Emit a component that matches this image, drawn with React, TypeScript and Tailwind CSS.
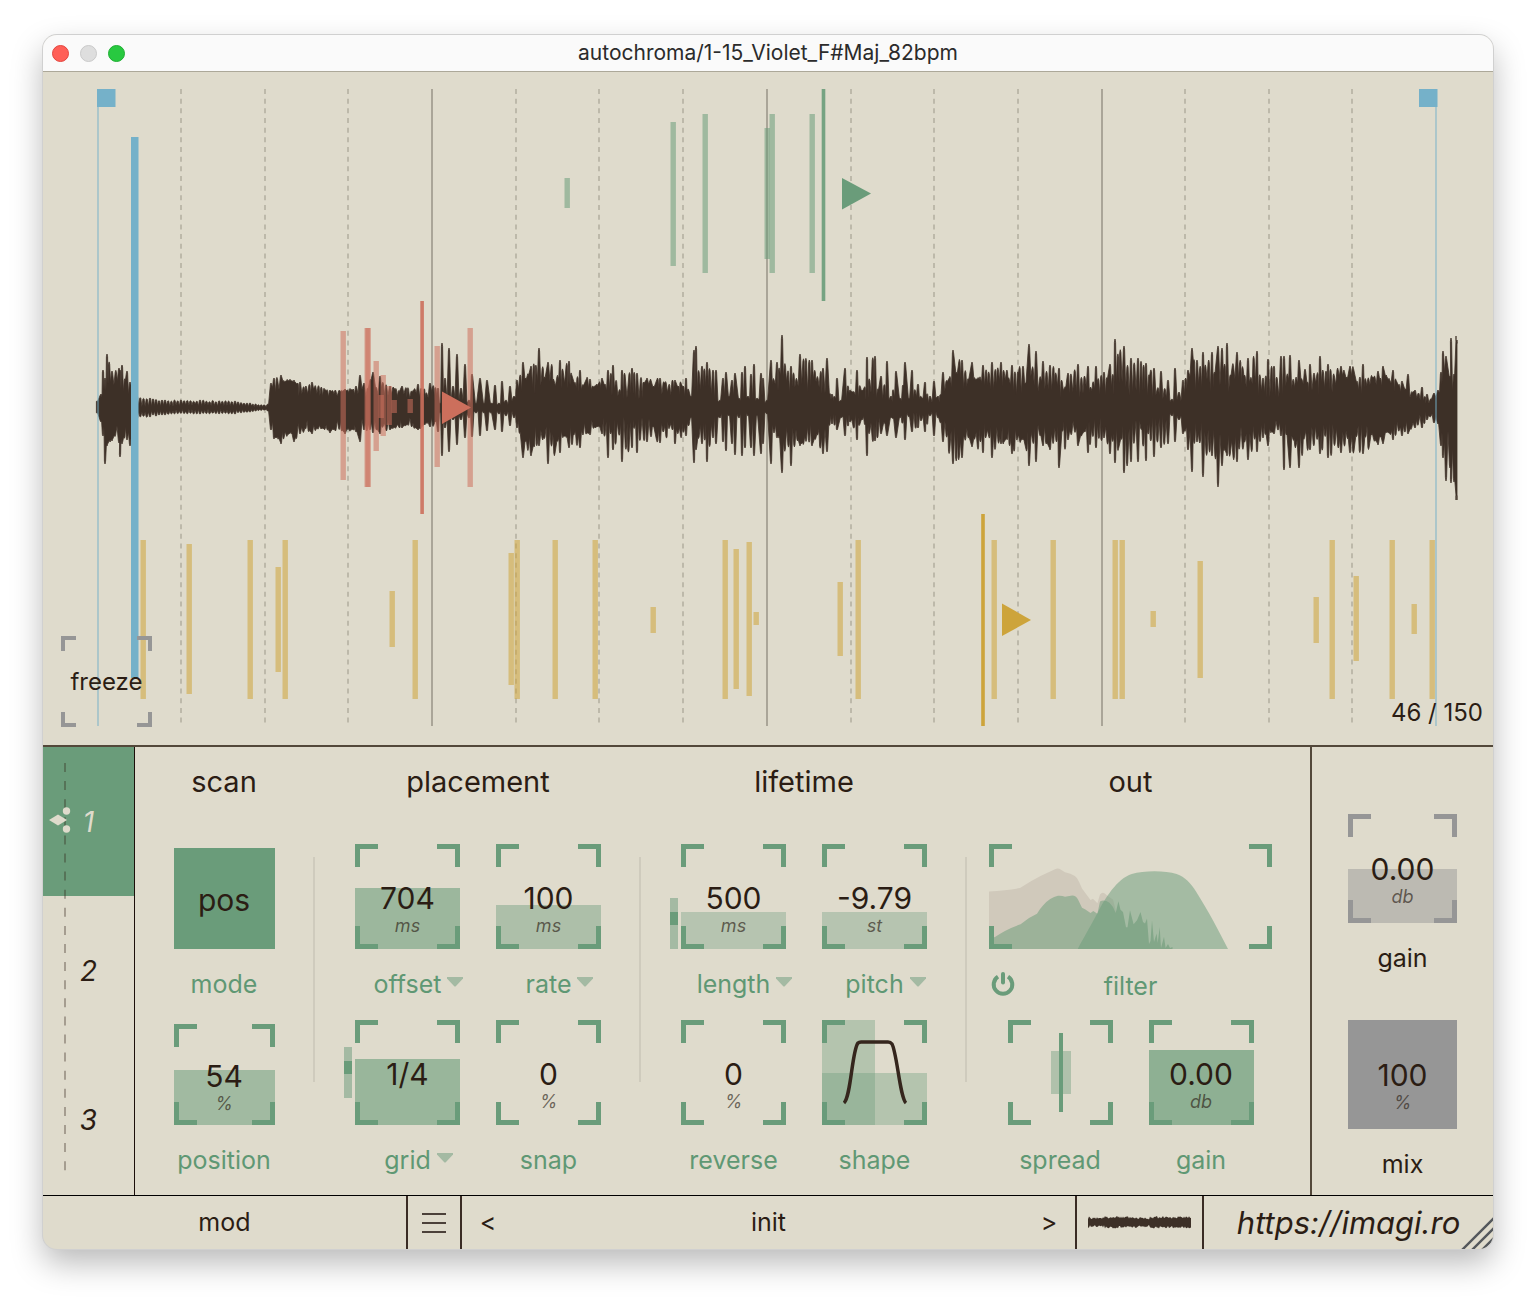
import { useId, type ReactNode } from "react";

/* ---------- waveform ---------- */

// x, upper peak, upper body, lower peak, lower body (distances from the centre line)
const ENVELOPE: number[][] = [
  [97, 7, 5, 5, 4], [101, 14, 8, 14, 8], [103, 38, 22, 28, 20], [105, 30, 20, 56, 25], [107, 54, 24, 38, 25],
  [112, 37, 22, 33, 24], [119, 40, 28, 35, 26], [120, 38, 28, 49, 28], [122, 43, 28, 36, 26], [127, 37, 22, 32, 20],
  [130, 26, 16, 38, 20], [137, 12, 3, 11, 3], [150, 10, 2, 9, 3], [165, 8, 2, 7, 3], [200, 8, 3, 6, 2],
  [235, 7, 2, 6, 2], [250, 5, 2, 4, 2], [264, 3, 1, 2, 1], [268, 4, 2, 3, 2], [271, 25, 14, 22, 14],
  [274, 30, 24, 31, 26], [281, 33, 24, 36, 28], [294, 28, 24, 34, 24], [300, 26, 17, 26, 20], [312, 26, 18, 26, 21],
  [330, 18, 16, 25, 20], [345, 19, 17, 26, 20], [356, 22, 18, 24, 20], [360, 33, 18, 34, 20], [364, 25, 17, 22, 14],
  [373, 36, 20, 25, 18], [380, 32, 18, 26, 18], [390, 22, 18, 22, 17], [402, 22, 16, 20, 16], [418, 24, 16, 22, 16],
  [430, 25, 13, 19, 14], [438, 20, 12, 24, 10], [440, 5, 4, 5, 3], [442, 65, 12, 48, 10], [445, 30, 10, 20, 8],
  [449, 60, 10, 44, 8], [453, 22, 8, 12, 7], [457, 54, 9, 37, 7], [461, 20, 7, 12, 6], [465, 44, 7, 30, 5],
  [469, 8, 5, 10, 5], [472, 34, 6, 29, 4], [476, 5, 4, 5, 3], [480, 30, 5, 28, 4], [484, 5, 4, 5, 3],
  [487, 28, 5, 23, 4], [491, 5, 4, 5, 3], [495, 23, 5, 22, 4], [499, 5, 4, 6, 3], [502, 27, 6, 24, 4],
  [506, 8, 4, 8, 3], [510, 22, 6, 18, 5], [514, 12, 5, 10, 4], [517, 28, 12, 20, 10], [523, 46, 24, 50, 28],
  [531, 42, 24, 48, 28], [539, 60, 22, 38, 28], [548, 46, 26, 56, 28], [560, 48, 26, 45, 28], [569, 47, 25, 40, 26],
  [580, 38, 22, 40, 20], [590, 29, 20, 27, 18], [602, 30, 22, 26, 16], [608, 38, 14, 50, 15], [613, 43, 16, 42, 18],
  [622, 38, 14, 54, 12], [632, 40, 12, 40, 14], [637, 35, 12, 45, 14], [647, 30, 20, 34, 16], [660, 30, 20, 35, 18],
  [675, 28, 20, 36, 18], [686, 30, 18, 28, 16], [691, 12, 8, 10, 8], [694, 58, 28, 55, 25], [696, 62, 26, 42, 25],
  [702, 42, 18, 36, 22], [707, 46, 20, 54, 20], [713, 38, 15, 30, 16], [716, 38, 12, 36, 10], [720, 8, 6, 10, 7],
  [723, 30, 10, 34, 8], [726, 36, 10, 43, 8], [729, 12, 8, 8, 6], [732, 28, 10, 36, 8], [735, 35, 10, 47, 8],
  [739, 10, 8, 10, 7], [742, 36, 10, 48, 8], [745, 42, 10, 40, 8], [748, 12, 6, 8, 5], [751, 34, 10, 40, 8],
  [754, 44, 10, 48, 8], [757, 10, 7, 8, 6], [761, 35, 10, 46, 8], [763, 30, 8, 36, 8], [767, 8, 5, 6, 4],
  [771, 48, 22, 56, 22], [777, 46, 25, 30, 22], [782, 73, 30, 65, 28], [791, 42, 20, 58, 22], [800, 54, 20, 38, 24],
  [812, 48, 25, 38, 24], [823, 40, 20, 46, 24], [827, 50, 18, 44, 20], [832, 14, 7, 16, 8], [837, 30, 8, 22, 8],
  [841, 8, 6, 10, 7], [845, 40, 10, 28, 8], [850, 18, 12, 14, 8], [857, 38, 15, 32, 10], [862, 18, 14, 12, 9],
  [867, 51, 12, 48, 14], [875, 52, 14, 33, 15], [881, 32, 14, 26, 12], [887, 47, 10, 28, 14], [891, 12, 8, 10, 8],
  [896, 37, 12, 30, 10], [900, 10, 8, 10, 8], [905, 46, 12, 32, 8], [909, 10, 8, 9, 7], [912, 38, 8, 24, 7],
  [918, 24, 8, 20, 6], [925, 26, 8, 24, 6], [930, 12, 7, 8, 5], [934, 27, 8, 28, 6], [938, 12, 7, 10, 6],
  [943, 36, 18, 34, 20], [953, 58, 28, 56, 28], [962, 48, 26, 50, 26], [972, 46, 28, 39, 28], [983, 43, 26, 45, 26],
  [992, 46, 24, 50, 28], [1001, 46, 25, 36, 30], [1012, 43, 22, 46, 28], [1023, 42, 18, 32, 22], [1029, 64, 26, 58, 25],
  [1036, 57, 22, 54, 25], [1043, 47, 20, 38, 26], [1050, 43, 20, 42, 25], [1059, 40, 16, 60, 20], [1068, 35, 18, 32, 18],
  [1078, 44, 14, 38, 24], [1088, 42, 16, 45, 16], [1096, 42, 18, 40, 14], [1104, 36, 18, 30, 14], [1110, 44, 22, 46, 24],
  [1115, 69, 20, 55, 24], [1124, 62, 22, 65, 22], [1131, 50, 14, 54, 20], [1138, 50, 14, 54, 16], [1146, 45, 14, 53, 14],
  [1154, 40, 10, 49, 14], [1161, 37, 10, 40, 12], [1168, 28, 8, 36, 8], [1172, 9, 6, 8, 5], [1175, 40, 8, 34, 6],
  [1179, 16, 8, 12, 6], [1183, 28, 12, 26, 10], [1188, 38, 26, 42, 16], [1192, 60, 32, 64, 24], [1197, 48, 24, 34, 22],
  [1203, 56, 24, 69, 22], [1212, 56, 28, 48, 22], [1218, 62, 40, 79, 34], [1222, 60, 32, 58, 30], [1227, 65, 24, 48, 28],
  [1237, 56, 26, 54, 28], [1248, 50, 22, 52, 26], [1257, 57, 20, 44, 24], [1263, 30, 18, 30, 20], [1268, 49, 14, 38, 20],
  [1274, 42, 12, 26, 20], [1281, 52, 10, 28, 16], [1284, 52, 18, 62, 20], [1290, 53, 22, 60, 24], [1299, 48, 26, 60, 25],
  [1310, 44, 20, 42, 20], [1320, 52, 20, 46, 20], [1328, 44, 26, 50, 24], [1341, 42, 26, 45, 25], [1350, 42, 28, 45, 26],
  [1363, 44, 22, 46, 26], [1378, 37, 26, 37, 25], [1383, 42, 24, 36, 24], [1393, 38, 24, 32, 20], [1402, 27, 18, 28, 20],
  [1408, 34, 16, 26, 18], [1415, 18, 10, 20, 10], [1422, 21, 6, 20, 8], [1427, 14, 5, 12, 6], [1434, 15, 10, 15, 10],
  [1438, 18, 14, 16, 12], [1441, 36, 16, 38, 14], [1443, 57, 26, 50, 22], [1446, 52, 30, 73, 28], [1450, 32, 20, 60, 24],
  [1451, 70, 28, 75, 34], [1454, 34, 22, 74, 30], [1456, 72, 70, 92, 90], [1457, 68, 60, 92, 90],
];

function noise(n: number) {
  const v = Math.sin(n * 127.1 + 31.7) * 43758.5453;
  return v - Math.floor(v);
}

// Outline of one half of the wave: rounded peaks with valleys between them.
function halfWave(peak: number, body: number) {
  const peaks: number[][] = [];
  ENVELOPE.forEach((key, i) => {
    peaks.push([key[0], key[peak], key[body]]);
    const after = ENVELOPE[i + 1];
    if (!after) return;
    const gap = after[0] - key[0];
    const quiet = key[peak] < 13 && gap > 10;
    const count = gap > 4.5 ? Math.round(gap / 3.1) : 1;
    for (let n = 1; n < count; n++) {
      const t = quiet ? n / count : (n + (noise(n + key[0] + body) - 0.5) * 0.5) / count;
      const x = key[0] + gap * t;
      const top = key[peak] + (after[peak] - key[peak]) * t;
      const low = key[body] + (after[body] - key[body]) * t;
      const lift = quiet ? 0.7 + 0.3 * noise(x + peak) : 0.1 + 0.9 * noise(x + peak);
      peaks.push([x, low + (top - low) * lift, low]);
    }
  });
  const points: number[][] = [];
  peaks.forEach(([x, h, low], i) => {
    const w = x > 1454 ? 0 : 0.6;
    points.push([x - w, h * 0.95], [x, h], [x + w, h * 0.95]);
    const after = peaks[i + 1];
    if (!after || after[0] - x < 2) return;
    const valley = ((low + after[2]) / 2) * (0.6 + 0.75 * noise(x * 1.7 + peak));
    if (Math.min(h, after[1]) > valley * 1.15) points.push([(x + after[0]) / 2, valley]);
  });
  return points;
}

function buildWave(centre: number) {
  const up = halfWave(1, 2).map(([x, h]) => `${x.toFixed(1)} ${(centre - h).toFixed(1)}`);
  const down = halfWave(3, 4).map(([x, h]) => `${x.toFixed(1)} ${(centre + h).toFixed(1)}`);
  return `M${up.join("L")}L${down.reverse().join("L")}Z`;
}

function buildMiniWave() {
  const up: string[] = [];
  const down: string[] = [];
  for (let x = 0; x <= 103; x += 1) {
    const body = x < 17 ? 3.2 : x > 48 && x < 62 ? 2.8 : 4;
    up.push(`${x} ${(7.5 - body - noise(x) * 2.8).toFixed(1)}`);
    down.push(`${x} ${(7.5 + body - 0.5 + noise(x + 0.5) * 2.6).toFixed(1)}`);
  }
  return `M${up.join("L")}L${down.reverse().join("L")}Z`;
}

const WAVE = buildWave(408);
const MINI_WAVE = buildMiniWave();

const BEATS = [181, 265, 348, 516, 599, 683, 851, 934, 1018, 1185, 1269, 1352];
const BARS = [432, 767, 1102];

// x centre, top, bottom
const GREEN_GRAINS = [
  [567, 178, 208], [673, 122, 266], [705, 114, 273], [767, 128, 259], [772, 114, 273], [812, 114, 273],
];
const RED_GRAINS = [
  [343, 331, 480], [367, 328, 487], [368, 328, 487], [376, 361, 451], [383, 375, 436], [389, 386, 425],
  [381, 395, 418], [394, 400, 413], [410, 399, 413], [437, 346, 467], [470, 328, 487],
];
const GOLD_GRAINS = [
  [143, 540, 699], [189, 544, 694], [250, 540, 699], [278, 567, 672], [285, 540, 699], [392, 591, 647],
  [415, 540, 699], [511, 553, 685], [517, 540, 699], [555, 540, 699], [595, 540, 699], [653, 607, 633],
  [725, 540, 699], [736, 549, 689], [749, 542, 696], [756, 612, 625], [840, 582, 656], [858, 540, 699],
  [994, 540, 699], [1053, 540, 699], [1115, 540, 699], [1122, 540, 699], [1153, 611, 627], [1200, 561, 678],
  [1316, 597, 643], [1332, 540, 699], [1356, 576, 661], [1392, 540, 699], [1414, 604, 634], [1432, 540, 699],
];

function Grains({ items, color }: { items: number[][]; color: string }) {
  return (
    <g fill={color} fillOpacity={0.55}>
      {items.map(([x, a, b], i) => (
        <rect key={i} x={x - 2.5} y={a} width={5.4} height={b - a} />
      ))}
    </g>
  );
}

function WaveView() {
  return (
    <section className="relative border-b-2 border-[#53483a]">
      <svg viewBox="43 72 1450 673" className="block h-auto w-full" role="img" aria-label="waveform">
        <g stroke="#bdb9aa" strokeWidth={2} strokeDasharray="5 4.67">
          {BEATS.map((x) => (
            <path key={x} d={`M${x} 89V724`} />
          ))}
        </g>
        <g stroke="#aaa598" strokeWidth={2}>
          {BARS.map((x) => (
            <path key={x} d={`M${x} 89V726`} />
          ))}
        </g>
        <path d={WAVE} fill="#3d3027" stroke="#3d3027" strokeWidth={0.8} strokeLinejoin="round" />
        <path d="M98 89V726M1436 89V726" stroke="#75b1c9" strokeOpacity={0.6} strokeWidth={1.6} />
        <path d="M97 89h18.500v18H97zM1419 89h18.500v18H1419z" fill="#75b1c9" />
        <Grains items={GREEN_GRAINS} color="#6a9c7a" />
        <Grains items={RED_GRAINS} color="#cc6f5c" />
        <Grains items={GOLD_GRAINS} color="#cda43b" />
        <rect x={821.700} y={89} width={3.600} height={212} fill="#6a9c7a" fillOpacity={0.9} />
        <rect x={420.300} y={301} width={3.600} height={213} fill="#cc6f5c" fillOpacity={0.9} />
        <rect x={981.200} y={514} width={3.600} height={212} fill="#cda43b" />
        <path d="M842 178L871 193.500L842 209.500Z" fill="#6a9c7a" />
        <path d="M442 391.500L471 407.500L442 424Z" fill="#cc6f5c" />
        <path d="M1002 603.500L1031 620L1002 636Z" fill="#cda43b" />
        <rect x={131} y={137} width={7.500} height={541} fill="#75b1c9" />
      </svg>
      <button className="absolute bottom-[18px] left-[18px] flex h-[91px] w-[91px] items-center justify-center text-2xl">
        <Corners tone="grey" small />
        freeze
      </button>
      <p className="absolute right-2.5 bottom-4 text-2xl leading-8">46 / 150</p>
    </section>
  );
}

/* ---------- controls ---------- */

function Corners({ tone = "green", small = false }: { tone?: "green" | "grey"; small?: boolean }) {
  const color = tone === "green" ? "border-[#6a9c7a]" : "border-[#969696]";
  const size = small ? "size-[15px]" : "size-[23px]";
  const base = `pointer-events-none absolute ${size} ${color}`;
  const edges = small
    ? ["border-t-4 border-l-4", "border-t-4 border-r-4", "border-b-4 border-l-4", "border-b-4 border-r-4"]
    : [
        "border-t-[5px] border-l-[5px]",
        "border-t-[5px] border-r-[5px]",
        "border-b-[5px] border-l-[5px]",
        "border-b-[5px] border-r-[5px]",
      ];
  return (
    <>
      <span className={`${base} top-0 left-0 ${edges[0]}`} />
      <span className={`${base} top-0 right-0 ${edges[1]}`} />
      <span className={`${base} bottom-0 left-0 ${edges[2]}`} />
      <span className={`${base} right-0 bottom-0 ${edges[3]}`} />
    </>
  );
}

type KnobProps = {
  label: string;
  value?: string;
  unit?: string;
  level?: number;
  strength?: number;
  tone?: "green" | "grey";
  size?: string;
  menu?: boolean;
  meter?: string;
  children?: ReactNode;
};

function Knob({
  label,
  value,
  unit,
  level = 0,
  strength = 0,
  tone = "green",
  size = "size-[105px] pb-[11px]",
  menu = false,
  meter,
  children,
}: KnobProps) {
  const id = useId();
  return (
    <div className="flex flex-col items-center justify-end">
      <div className={`relative flex shrink-0 flex-col items-center justify-end ${size}`}>
        <span
          className={`absolute inset-x-0 bottom-0 ${tone === "green" ? "bg-[#6a9c7a]" : "bg-[#969696]"}`}
          style={{ height: `${level}%`, opacity: strength }}
        />
        <Corners tone={tone} />
        {meter && (
          <span className={`absolute -left-[11px] h-[51px] w-2 bg-[#a4baa3] pt-3.5 ${meter}`}>
            <span className="block h-[13px] bg-[#6a9c7a]" />
          </span>
        )}
        {children}
        {value && <span className="relative text-3xl leading-8">{value}</span>}
        {value && <span className="relative h-6 text-lg leading-6 text-[#2b1d14]/65 italic">{unit}</span>}
        <input
          id={id}
          type="range"
          min={0}
          max={100}
          defaultValue={level}
          className="absolute inset-0 size-full cursor-ns-resize opacity-0"
        />
      </div>
      <div className={`relative mt-5 flex ${tone === "green" ? "text-[#5f9874]" : ""}`}>
        <label htmlFor={id} className="text-[25px] leading-[30px]">
          {label}
        </label>
        {menu && (
          <button aria-label={`${label} options`} className="absolute top-2 left-full ml-1.5">
            <svg viewBox="0 0 16 10" className="block h-2.5 w-4" fill="#a4baa3">
              <path d="M0 0H16V1.500L9 9Q8 10 7 9L0 1.500Z" />
            </svg>
          </button>
        )}
      </div>
    </div>
  );
}

function Section({ title, className = "", children }: { title: string; className?: string; children: ReactNode }) {
  return (
    <section className={`relative flex flex-col items-center ${className}`}>
      <h2 className="mb-11 text-[29px] leading-9">{title}</h2>
      {children}
    </section>
  );
}

function Divider() {
  return <span className="absolute top-[93px] right-0 h-[225px] w-0.5 bg-[#cfcbbd]" />;
}

function FilterGraph() {
  return (
    <div className="relative h-[105px] w-[283px]">
      <svg viewBox="0 0 283 106" className="size-full" preserveAspectRatio="none" role="img" aria-label="filter response">
        <path
          fill="#d0c9bb"
          d="M0 106V48Q18 47 31 44.500Q42 37 52 32L66 25.500Q69 24 72 26L76 28.500Q88 31 90 38L93 45L101.500 56.500L104 55.300L108.400 59.700L111 51Q114 47 118 52L124 56L127 68V106Z"
        />
        <path
          fill="#9cb299"
          d="M0 106V96L6 94Q17 86 31.600 81Q40 74 48 70.500Q51 65 54 62Q61 54 69 52.300Q73 52 76 53.300L83.300 52Q87 52 89 56L93 64.300L96.400 66L101.500 69.700L104.300 67.700L108.400 70.300L111 58Q115 55.500 120.500 59.300L124 63.700L126.700 69.700L129.400 57.700L131.500 66.300L134 68.700L137 84H138.500L141 67L144.600 81L148 77L151.500 68.700L154 78.700L156 80.300L158 75.300L160 101L161.500 98L163 77L165 99L167.600 90.300L168.700 100L170.700 83.700L172 105L175 93.700L176.600 105L179 101L181 105L183.500 104V106Z"
        />
        <path
          fill="#6a9c7a"
          fillOpacity={0.5}
          d="M88.800 106C94 96 101 84 108.400 70C116 55 128 35 142.800 30.300C155 26.500 176 26.500 187.600 30.300C196 33 202 40 207 48C220 69 230 88 239 106Z"
        />
      </svg>
      <Corners />
    </div>
  );
}

function FxPanel() {
  return (
    <div className="grid grow grid-cols-[180fr_326fr_326fr_343fr] pt-[17px] pb-5">
      <Section title="scan" className="pr-0.5">
        <div className="grid grid-rows-[155px_155px] gap-y-[21px]">
          <div className="flex flex-col items-center justify-end">
            <button id="mode" className="size-[101px] bg-[#6a9c7a] pt-0.5 text-3xl">
              pos
            </button>
            <label htmlFor="mode" className="mt-5 text-[25px] leading-[30px] text-[#5f9874]">
              mode
            </label>
          </div>
          <Knob label="position" value="54" unit="%" level={54} strength={0.53} size="size-[101px] pb-[9px]" />
        </div>
        <Divider />
      </Section>

      <Section title="placement">
        <div className="grid grid-cols-[105px_105px] grid-rows-[155px_155px] gap-x-9 gap-y-[21px]">
          <Knob label="offset" value="704" unit="ms" level={58} strength={0.58} menu />
          <Knob label="rate" value="100" unit="ms" level={42} strength={0.43} menu />
          <Knob label="grid" value="1/4" level={63} strength={0.6} menu meter="top-[27px]" />
          <Knob label="snap" value="0" unit="%" />
        </div>
        <Divider />
      </Section>

      <Section title="lifetime">
        <div className="grid grid-cols-[105px_105px] grid-rows-[155px_155px] gap-x-9 gap-y-[21px]">
          <Knob label="length" value="500" unit="ms" level={35} strength={0.35} menu meter="bottom-0" />
          <Knob label="pitch" value="-9.79" unit="st" level={35} strength={0.35} menu />
          <Knob label="reverse" value="0" unit="%" />
          <Knob label="shape" level={50} strength={0.36}>
            <span className="absolute inset-y-0 left-0 w-1/2 bg-[#6a9c7a]/36" />
            <svg viewBox="0 0 105 105" className="absolute inset-0" fill="none" stroke="#35261d" strokeWidth={3.5}>
              <path d="M22 83C29 77 30 30 36 23Q37 22 39 22H66Q68.500 22 70 24C75 33 78 78 84 83" />
            </svg>
          </Knob>
        </div>
        <Divider />
      </Section>

      <Section title="out" className="pr-4">
        <div className="grid grid-rows-[155px_155px] gap-y-[21px]">
          <div className="flex flex-col">
            <FilterGraph />
            <div className="mt-[22px] grid grid-cols-[28px_1fr_28px] items-center justify-items-center">
              <button aria-label="filter power">
                <svg viewBox="0 0 24 24" className="-mt-1 size-6" fill="none" stroke="#6a9c7a" strokeWidth={4}>
                  <path d="M7 4.600A9.300 9.300 0 1 0 17 4.600" />
                  <path d="M12 2V10.500" strokeLinecap="round" />
                </svg>
              </button>
              <span className="text-[25px] leading-[30px] text-[#5f9874]">filter</span>
            </div>
          </div>
          <div className="grid grid-cols-[105px_105px] justify-center gap-x-9">
            <Knob label="spread">
              <svg viewBox="0 0 105 105" className="absolute inset-0" fill="#6a9c7a">
                <rect x={43} y={31} width={20} height={43} fillOpacity={0.4} />
                <rect x={51} y={13} width={4} height={79} />
              </svg>
            </Knob>
            <Knob label="gain" value="0.00" unit="db" level={71} strength={0.69} />
          </div>
        </div>
      </Section>
    </div>
  );
}

function VoiceTabs() {
  return (
    <nav className="relative grid w-[92px] shrink-0 grid-rows-3 border-r border-[#1c0f0a] text-[28px] italic">
      <svg
        className="pointer-events-none absolute top-4 left-[21px] z-10 h-[408px] w-0.5"
        stroke="#2b1d14"
        strokeOpacity={0.32}
        strokeWidth={2}
        strokeDasharray="9 9.1"
      >
        <path d="M1 0V408" />
      </svg>
      <button className="relative bg-[#6a9c7a] text-[#dfdbcc]">
        <svg viewBox="0 0 22 26" className="absolute top-[60px] left-1.5 z-20 h-[26px] w-[22px]" fill="#dfdbcc">
          <path d="M0 13L9 7.500L18 13L9 18.500Z" />
          <circle cx={17.500} cy={4} r={3.700} />
          <circle cx={17.500} cy={22} r={3.700} />
        </svg>
        1
      </button>
      <button>2</button>
      <button>3</button>
    </nav>
  );
}

function Footer() {
  return (
    <footer className="grid h-[54px] grid-cols-[365fr_54fr_616fr_127fr_289fr] divide-x-2 divide-[#3a2c24] border-t border-black text-[25px]">
      <button>mod</button>
      <button aria-label="menu" className="flex items-center justify-center">
        <svg viewBox="0 0 24 20" className="h-5 w-6" stroke="#1c0f0a" strokeWidth={1.6}>
          <path d="M0 1H24M0 10H24M0 19H24" />
        </svg>
      </button>
      <div className="flex items-center justify-between px-[18px]">
        <button aria-label="previous preset">&lt;</button>
        <span>init</span>
        <button aria-label="next preset">&gt;</button>
      </div>
      <div className="flex items-center justify-center">
        <svg viewBox="0 0 103 16" className="h-4 w-[103px]" fill="#3d3027">
          <path d={MINI_WAVE} />
        </svg>
      </div>
      <div className="relative flex items-center justify-center">
        <a href="https://imagi.ro" className="text-[31px] leading-9 italic">
          https://imagi.ro
        </a>
        <svg viewBox="0 0 32 32" className="absolute right-0 bottom-0 size-8" stroke="#54585c" strokeWidth={2.4} fill="none">
          <path d="M1 33L33 1M11 33L33 11M21 33L33 21" />
        </svg>
      </div>
    </footer>
  );
}

export default function App() {
  return (
    <div className="min-h-screen bg-white px-[43px] pt-[35px] pb-[50px] font-['Inter','Noto_Sans',sans-serif] text-[#2b1d14]">
      <main className="overflow-hidden rounded-[14px] bg-[#dfdbcc] shadow-[0_0_0_1px_#d0d0d0,0_14px_32px_rgba(0,0,0,0.28)]">
        <header className="grid h-[37px] grid-cols-[1fr_auto_1fr] items-center border-b border-[#aca899] bg-[#fafafa] px-[9px]">
          <div className="flex gap-[11px]">
            <button aria-label="close" className="size-[17px] rounded-full border border-[#e2463f] bg-[#ff5f57]" />
            <button aria-label="minimise" className="size-[17px] rounded-full border border-[#c9c9c9] bg-[#dedede]" />
            <button aria-label="zoom" className="size-[17px] rounded-full border border-[#1fae33] bg-[#28c940]" />
          </div>
          <h1 className="text-[21px] leading-8 text-[#2b2b2b]">autochroma/1-15_Violet_F#Maj_82bpm</h1>
        </header>
        <WaveView />
        <div className="flex">
          <VoiceTabs />
          <FxPanel />
          <aside className="flex w-[183px] shrink-0 flex-col items-center gap-[47px] border-l-2 border-[#53483a] pt-[67px]">
            <Knob label="gain" value="0.00" unit="db" level={50} strength={0.49} tone="grey" size="size-[109px] pb-3.5" />
            <Knob label="mix" value="100" unit="%" level={100} strength={1} tone="grey" size="size-[109px] pb-3.5" />
          </aside>
        </div>
        <Footer />
      </main>
    </div>
  );
}
